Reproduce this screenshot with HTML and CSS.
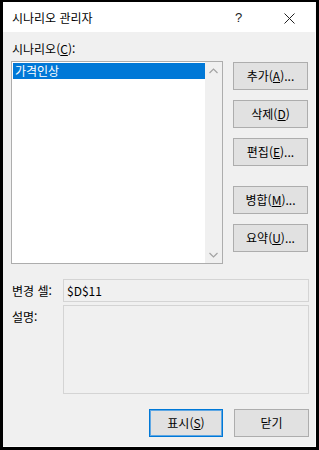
FILE: index.html
```html
<!DOCTYPE html>
<html lang="ko">
<head>
<meta charset="utf-8">
<title>시나리오 관리자</title>
<link rel="stylesheet" href="styles.css">
</head>
<body>
<div class="dialog">
  <div class="titlebar">
    <span class="title">시나리오 관리자</span>
    <span class="help">?</span>
    <span class="close">
      <svg width="11" height="11" viewBox="0 0 11 11"><path d="M0.5 0.5 L10.5 10.5 M10.5 0.5 L0.5 10.5" stroke="#222" stroke-width="1" fill="none"/></svg>
    </span>
  </div>
  <div class="content">
    <div class="label-top">시나리오(<u>C</u>):</div>
    <div class="main-row">
      <div class="listbox">
        <div class="list-items">
          <div class="item selected">가격인상</div>
        </div>
        <div class="scrollbar">
          <svg class="arrow" width="9" height="6" viewBox="0 0 9 6"><path d="M0.5 5 L4.5 1 L8.5 5" stroke="#a3a3a3" stroke-width="1.2" fill="none"/></svg>
          <svg class="arrow" width="9" height="6" viewBox="0 0 9 6"><path d="M0.5 1 L4.5 5 L8.5 1" stroke="#a3a3a3" stroke-width="1.2" fill="none"/></svg>
        </div>
      </div>
      <div class="side-buttons">
        <button class="btn">추가(<u>A</u>)...</button>
        <button class="btn">삭제(<u>D</u>)</button>
        <button class="btn">편집(<u>E</u>)...</button>
        <button class="btn gap-before">병합(<u>M</u>)...</button>
        <button class="btn">요약(<u>U</u>)...</button>
      </div>
    </div>
    <div class="fields">
      <div class="field-label">변경 셀:</div>
      <div class="field">$D$11</div>
      <div class="field-label">설명:</div>
      <div class="field area"></div>
    </div>
    <div class="bottom-buttons">
      <button class="btn default">표시(<u>S</u>)</button>
      <button class="btn">닫기</button>
    </div>
  </div>
</div>
</body>
</html>
```
FILE: styles.css
```css
html, body {
  margin: 0;
  padding: 0;
  background: #000;
}
body {
  padding: 2px 3px 3px 3px;
  width: 319px;
  height: 450px;
  box-sizing: border-box;
  font-family: "Noto Sans CJK KR", "Noto Sans", sans-serif;
  font-size: 12px;
  color: #000;
}
.dialog {
  width: 313px;
  height: 445px;
  background: #f0f0f0;
  display: flex;
  flex-direction: column;
  box-sizing: border-box;
  border-right: 1px solid #fafafa;
  border-bottom: 1px solid #fafafa;
}
.titlebar {
  height: 30px;
  background: #fff;
  display: flex;
  align-items: center;
  padding-left: 9px;
  flex: none;
}
.title {
  flex: 1;
  font-size: 12px;
  line-height: 16px;
  margin-top: 1px;
}
.help {
  width: 10px;
  font-size: 13px;
  line-height: 16px;
  color: #222;
  font-family: "Liberation Sans", sans-serif;
  margin-right: 39px;
  margin-top: 1px;
}
.close {
  display: flex;
  width: 11px;
  height: 11px;
  margin-right: 20px;
  margin-top: 2px;
}
.content {
  padding: 9px 6px 0 8px;
  display: flex;
  flex-direction: column;
}
.label-top {
  line-height: 16px;
  height: 16px;
  padding-left: 1px;
}
u {
  text-decoration: underline;
  text-underline-offset: 1px;
}
.main-row {
  margin-top: 4px;
  display: flex;
  gap: 10px;
}
.listbox {
  width: 212px;
  height: 203px;
  box-sizing: border-box;
  border: 1px solid #adadad;
  background: #fff;
  display: flex;
  padding: 1px 0 1px 1px;
}
.list-items {
  flex: 1;
}
.item {
  height: 16px;
  line-height: 16px;
  padding-left: 2px;
}
.item.selected {
  background: #0078d7;
  color: #fff;
}
.scrollbar {
  width: 17px;
  background: #f0f0f0;
  display: flex;
  flex-direction: column;
  justify-content: space-between;
  align-items: center;
  padding: 6px 0 5px;
  margin-top: -1px;
  margin-bottom: -1px;
}
.side-buttons {
  margin-top: 1px;
  display: flex;
  flex-direction: column;
  gap: 10px;
}
.btn {
  width: 75px;
  height: 28px;
  box-sizing: border-box;
  border: 1px solid #adadad;
  background: #e1e1e1;
  font-family: "Noto Sans CJK KR", "Noto Sans", sans-serif;
  font-size: 12px;
  color: #000;
  padding: 0;
  line-height: 16px;
}
.btn.gap-before {
  margin-top: 10px;
}
.fields {
  margin-top: 15px;
  display: grid;
  grid-template-columns: 52px 1fr;
  row-gap: 3px;
}
.field-label {
  line-height: 16px;
  padding-top: 4px;
  padding-left: 1px;
}
.field {
  height: 23px;
  box-sizing: border-box;
  border: 1px solid #d4d4d4;
  background: #f0f0f0;
  line-height: 16px;
  padding: 3px 3px;
}
.field.area {
  height: 89px;
}
.bottom-buttons {
  margin-top: 15px;
  display: flex;
  justify-content: flex-end;
  gap: 11px;
}
.btn.default {
  width: 74px;
  border-color: #0078d7;
  box-shadow: inset 0 0 0 1px #5fa7e3;
}
```
